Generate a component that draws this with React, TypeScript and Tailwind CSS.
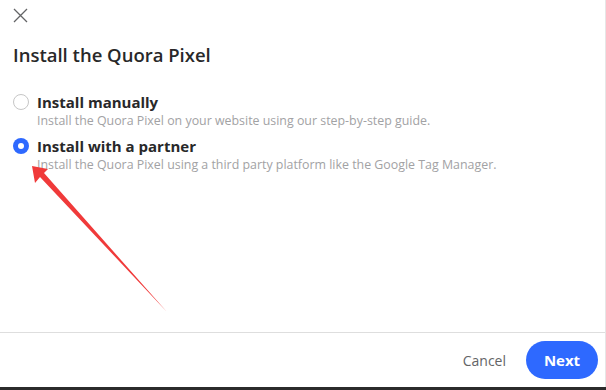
export default function App() {
  return (
    <div className="relative h-[390px] w-[606px] overflow-hidden bg-white font-['Open_Sans',sans-serif] text-[#282829]">
      <div className="flex h-[387px] flex-col border-r border-[#e6e6e6]">
        <div className="px-[13px] pt-[8px]">
          <svg width="15" height="15" viewBox="0 0 15 15" className="text-[#636466]">
            <path d="M1 1L14 14M14 1L1 14" stroke="currentColor" strokeWidth="1.3" />
          </svg>
        </div>
        <h1 className="mt-[20px] px-[13px] text-[18.5px] font-semibold leading-[24px]">Install the Quora Pixel</h1>
        <div className="mt-[25px] flex flex-col gap-[6px] px-[13px]">
          <div className="flex gap-[8px]">
            <span className="mt-[2px] size-[16px] shrink-0 rounded-full border border-[#c6c6c6] bg-white" />
            <div>
              <div className="text-[15px] font-bold leading-[20px]">Install manually</div>
              <div className="text-[12.4px] leading-[18px] text-[#a2a2a4]">
                Install the Quora Pixel on your website using our step-by-step guide.
              </div>
            </div>
          </div>
          <div className="flex gap-[8px]">
            <span className="mt-[2px] flex size-[16px] shrink-0 items-center justify-center rounded-full bg-[#2e69ff]">
              <span className="size-[6px] rounded-full bg-white" />
            </span>
            <div>
              <div className="text-[15px] font-bold leading-[20px]">Install with a partner</div>
              <div className="text-[12.4px] leading-[18px] text-[#a2a2a4]">
                Install the Quora Pixel using a third party platform like the Google Tag Manager.
              </div>
            </div>
          </div>
        </div>
        <div className="flex-1" />
        <div className="flex h-[55px] items-center justify-end gap-[20px] border-t border-[#dedede] pr-[7px]">
          <button className="text-[14px] text-[#636466]">Cancel</button>
          <button className="h-[38px] w-[72px] rounded-full bg-[#2e69ff] text-[15px] font-bold text-white">Next</button>
        </div>
      </div>
      <div className="h-[3px] bg-[#2b2b2b]" />
      <svg className="absolute left-0 top-0" width="606" height="390" viewBox="0 0 606 390">
        <polygon points="32,166 48,169 44,173 167,312 40,177 35,183" fill="#f03a3a" />
      </svg>
    </div>
  );
}
